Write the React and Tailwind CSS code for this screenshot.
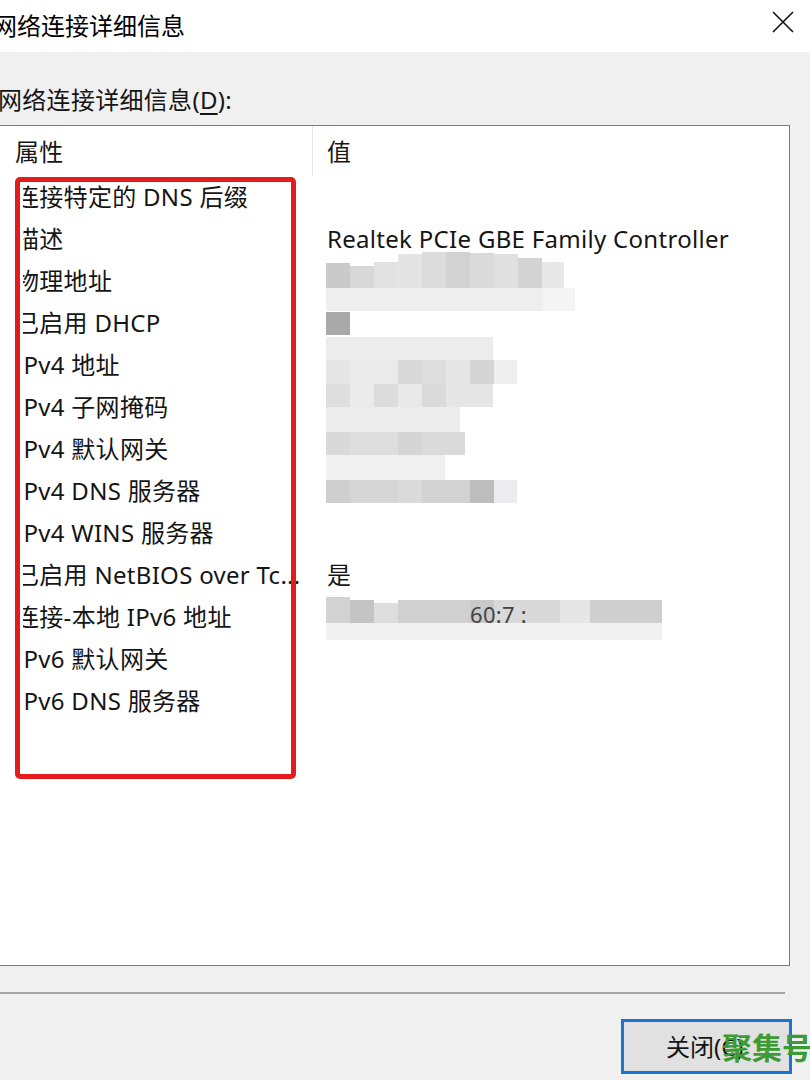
import React from "react";

const FONT = { fontFamily: '"Noto Sans", "Noto Sans CJK SC", sans-serif' };

const rows = [
  ["连接特定的 DNS 后缀", ""],
  ["描述", "Realtek PCIe GBE Family Controller"],
  ["物理地址", ""],
  ["已启用 DHCP", ""],
  ["IPv4 地址", ""],
  ["IPv4 子网掩码", ""],
  ["IPv4 默认网关", ""],
  ["IPv4 DNS 服务器", ""],
  ["IPv4 WINS 服务器", ""],
  ["已启用 NetBIOS over Tc...", "是"],
  ["连接-本地 IPv6 地址", ""],
  ["IPv6 默认网关", ""],
  ["IPv6 DNS 服务器", ""],
];

// mosaic blocks (page coords): [x, y, w, h, color]
const mosaic = [
  [326, 263, 24, 25, "#cacaca"], [350, 266, 24, 22, "#d8d8d8"], [374, 262, 24, 26, "#e2e2e2"],
  [398, 254, 24, 34, "#e4e4e4"], [422, 252, 24, 36, "#dcdcdc"], [446, 252, 24, 36, "#d2d2d2"],
  [470, 253, 24, 35, "#dadada"], [494, 254, 24, 34, "#e0e0e0"], [518, 258, 24, 30, "#d3d3d3"],
  [542, 262, 22, 26, "#e8e8e8"],
  [326, 288, 216, 23, "#eeeeee"], [542, 288, 33, 23, "#f4f4f4"],
  [326, 312, 24, 23, "#a9a9a9"],
  [326, 337, 167, 23, "#ececec"],
  [326, 360, 24, 24, "#e6e6e6"], [350, 360, 48, 24, "#eaeaea"], [398, 360, 24, 24, "#d9d9d9"],
  [422, 360, 24, 24, "#dedede"], [446, 360, 24, 24, "#e6e6e6"], [470, 360, 24, 24, "#d5d5d5"],
  [494, 360, 23, 24, "#eeeeee"],
  [326, 384, 24, 23, "#dedede"], [350, 384, 24, 23, "#ebebeb"], [374, 384, 24, 23, "#dcdcdc"],
  [398, 384, 24, 23, "#e9e9e9"], [422, 384, 24, 23, "#dadada"], [446, 384, 47, 23, "#e6e6e6"],
  [326, 407, 134, 25, "#ececec"],
  [326, 432, 24, 23, "#d9d9d9"], [350, 432, 48, 23, "#dddddd"], [398, 432, 24, 23, "#d5d5d5"],
  [422, 432, 43, 23, "#dadada"],
  [326, 455, 119, 25, "#f0f0f0"],
  [326, 480, 24, 23, "#cfcfcf"], [350, 480, 48, 23, "#d6d6d6"], [398, 480, 24, 23, "#dadada"],
  [422, 480, 48, 23, "#d2d2d2"], [470, 480, 24, 23, "#bdbdbd"], [494, 480, 23, 23, "#ebebf0"],
  [326, 597, 24, 26, "#d2d2d2"], [350, 600, 24, 23, "#c4c4c4"], [374, 603, 24, 20, "#dddddd"],
  [398, 600, 72, 23, "#d0d0d0"], [470, 600, 24, 23, "#c9c9c9"], [494, 600, 66, 23, "#d9d9d9"],
  [560, 600, 30, 23, "#e6e6e6"], [590, 600, 72, 23, "#cfcfcf"],
  [326, 623, 336, 17, "#f1f1f1"],
];

function Mosaic() {
  const ox = 320;
  const oy = 245;
  return (
    <svg
      className="absolute pointer-events-none"
      style={{ left: ox, top: oy }}
      width={360}
      height={400}
      viewBox="0 0 360 400"
    >
      {mosaic.map(([x, y, w, h, c], i) => (
        <rect key={i} x={x - ox} y={y - oy} width={w} height={h} fill={c} />
      ))}
      <text x={470 - ox} y={623 - oy} fontSize="22" fill="#444" style={FONT}>
        60:7 :
      </text>
    </svg>
  );
}

export default function App() {
  return (
    <div
      className="relative w-[810px] h-[1080px] overflow-hidden bg-[#f0f0f0] text-[#151515] tracking-[0.3px]"
      style={FONT}
    >
      {/* title bar */}
      <div className="h-[52px] bg-white flex items-center justify-between">
        <span className="ml-[-7px] text-[24px] leading-[32px] text-black tracking-normal">网络连接详细信息</span>
        <svg width="24" height="24" viewBox="0 0 24 24" className="mr-[15px] mt-[-8px]">
          <path d="M2 2 L22 22 M22 2 L2 22" stroke="#111" strokeWidth="1.6" fill="none" />
        </svg>
      </div>

      {/* label */}
      <div className="mt-[32px] ml-[-2px] text-[24px] leading-[32px]">
        网络连接详细信息(<span className="underline underline-offset-4">D</span>):
      </div>

      {/* list box */}
      <div className="mt-[9px] ml-[-2px] w-[792px] h-[841px] border border-[#7a7a7a] bg-white">
        <div className="flex h-[50px] text-[24px] leading-[32px]">
          <div className="w-[314px] border-r border-[#e6e6e6] pl-[16px] pt-[10px]">属性</div>
          <div className="pl-[14px] pt-[10px]">值</div>
        </div>
        {rows.map(([k, v], i) => (
          <div key={i} className="flex h-[42px] items-center text-[24px] leading-[32px] whitespace-nowrap">
            <div className="w-[315px] pl-[24px]">
              <div className="overflow-hidden">
                <div className="ml-[-8px]">{k}</div>
              </div>
            </div>
            <div className="pl-[13px]">{v}</div>
          </div>
        ))}
      </div>

      {/* separator */}
      <div className="mt-[26px] h-[2px] w-[785px] bg-[#a3a3a3]" />

      {/* button */}
      <div className="mt-[25px] ml-[621px] w-[171px] h-[55px] border-[3px] border-[#1a74d2] bg-[#e1e1e1] flex items-center pl-[42px] text-[24px] whitespace-nowrap tracking-normal">
        关闭(C)
      </div>

      <Mosaic />

      {/* red annotation box */}
      <div className="absolute left-[15px] top-[177px] w-[281px] h-[602px] border-[5px] border-[#e41b1b] rounded-[5px]" />

      {/* watermark */}
      <div
        className="absolute left-[722px] top-[1022px] text-[30px] font-bold text-[#3d9b35] leading-[48px] whitespace-nowrap tracking-normal"
        style={{ fontFamily: '"Noto Sans CJK SC", sans-serif' }}
      >
        聚集号
      </div>
    </div>
  );
}
